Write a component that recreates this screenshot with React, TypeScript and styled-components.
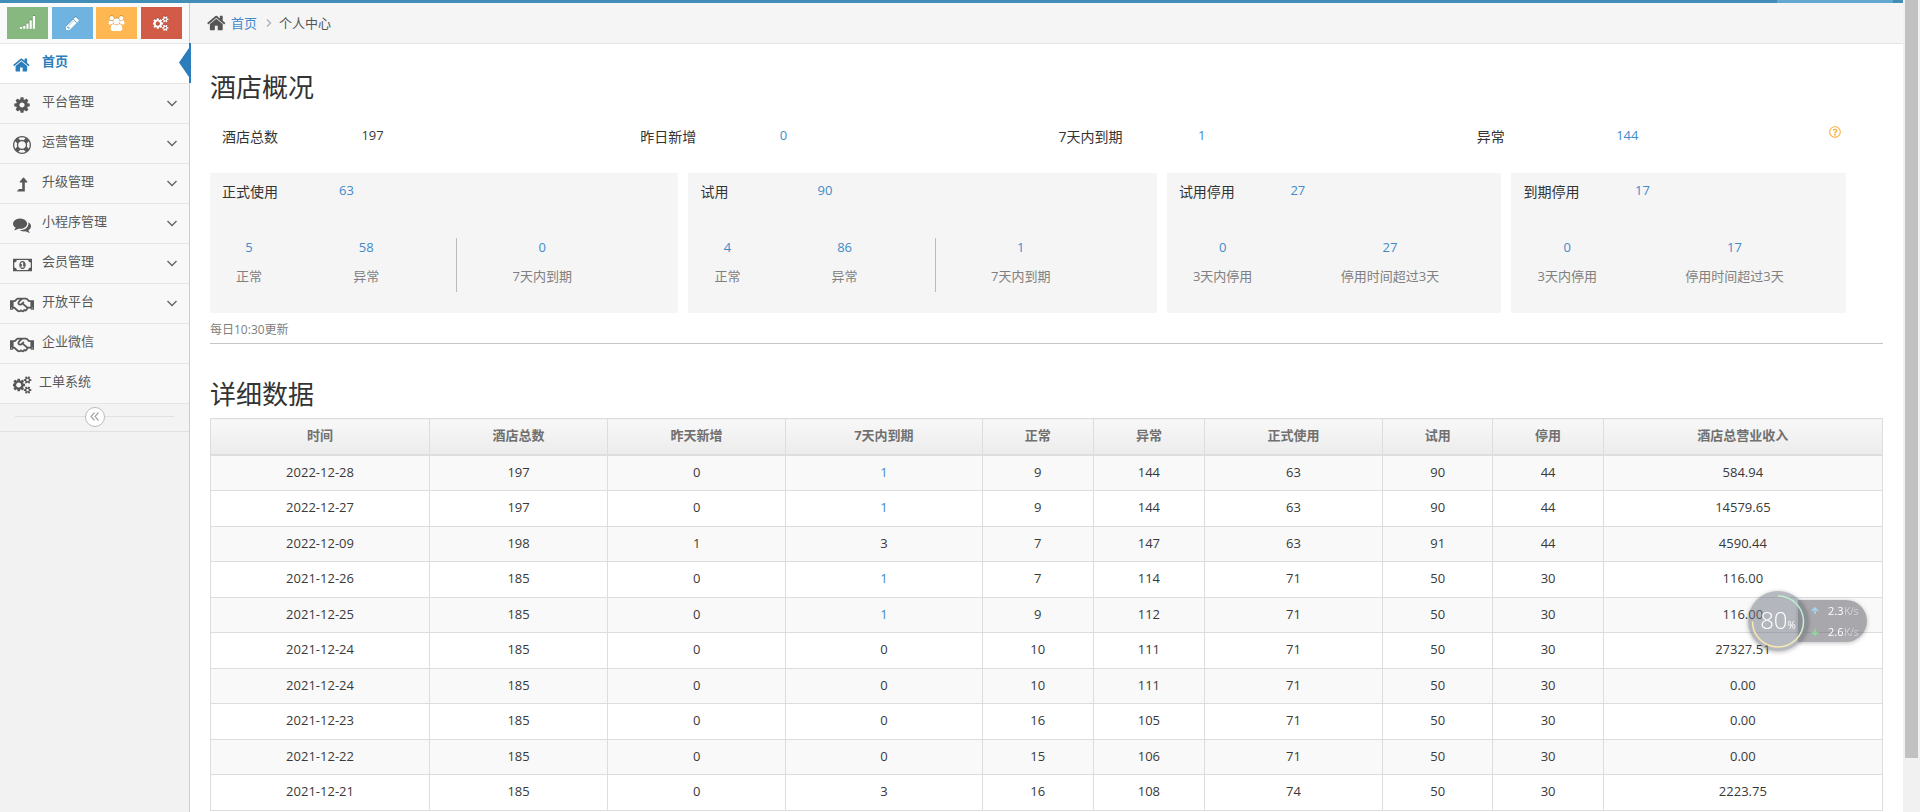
import React from "react";
import styled, { createGlobalStyle } from "styled-components";
import { FaRegHandshake, FaRegQuestionCircle } from "react-icons/fa";

const GlobalStyle = createGlobalStyle`
  *, *::before, *::after { box-sizing: border-box; }
  html { overflow: hidden; }
  body {
    margin: 0;
    background: #fff;
    color: #393939;
    font-family: "Open Sans", "Noto Sans CJK SC", sans-serif;
    font-size: 13px;
    line-height: 20px;
  }
  a { color: #428bca; text-decoration: none; }
`;

/* ---------- icons ---------- */

const PATHS = {
  signal: {
    w: 1792,
    d: "M256 1312v192q0 14-9 23t-23 9H32q-14 0-23-9t-9-23v-192q0-14 9-23t23-9h192q14 0 23 9t9 23zM640 1184v320q0 14-9 23t-23 9H416q-14 0-23-9t-9-23v-320q0-14 9-23t23-9h192q14 0 23 9t9 23zM1024 928v576q0 14-9 23t-23 9H800q-14 0-23-9t-9-23V928q0-14 9-23t23-9h192q14 0 23 9t9 23zM1408 544v960q0 14-9 23t-23 9h-192q-14 0-23-9t-9-23V544q0-14 9-23t23-9h192q14 0 23 9t9 23zM1792 32v1472q0 14-9 23t-23 9h-192q-14 0-23-9t-9-23V32q0-14 9-23t23-9h192q14 0 23 9t9 23z",
  },
  pencil: {
    w: 1792,
    d: "M491 1536l91-91-235-235-91 91v107h128v128h107zm523-928q0-22-22-22-10 0-17 7l-542 542q-7 7-7 17 0 22 22 22 10 0 17-7l542-542q7-7 7-17zm-54-192l416 416-832 832h-416v-416zm683 96q0 53-37 90l-166 166-416-416 166-165q36-38 90-38 53 0 91 38l235 234q37 39 37 91z",
  },
  users: {
    w: 2048,
    d: "M657 896q-162 5-265 128h-134q-82 0-138-40.5t-56-118.5q0-353 124-353 6 0 43.500 21t97.500 42.500 119 21.500q67 0 133-23-5 37-5 66 0 159 81 298zm1071 637q0 120-73 189.500t-194 69.500h-874q-121 0-194-69.500t-73-189.500q0-53 3.500-103.500t14-109 26.500-108.500 43-97.500 62-81 85.500-53.500 111.500-20q10 0 43 21.500t73 48 107 48 135 21.500 135-21.500 107-48 73-48 43-21.500q61 0 111.500 20t85.500 53.500 62 81 43 97.500 26.500 108.500 14 109 3.500 103.500zm-1024-1277q0 106-75 181t-181 75-181-75-75-181 75-181 181-75 181 75 75 181zm704 384q0 159-112.500 271.500t-271.500 112.500-271.500-112.500-112.500-271.500 112.500-271.500 271.500-112.500 271.500 112.500 112.500 271.500zm576 225q0 78-56 118.500t-138 40.500h-134q-103-123-265-128 81-139 81-298 0-29-5-66 66 23 133 23 59 0 119-21.500t97.500-42.500 43.500-21q124 0 124 353zm-128-609q0 106-75 181t-181 75-181-75-75-181 75-181 181-75 181 75 75 181z",
  },
  cogs: {
    w: 1920,
    d: "M832 896q0-106-75-181t-181-75-181 75-75 181 75 181 181 75 181-75 75-181zm768 512q0-52-38-90t-90-38-90 38-38 90q0 53 37.500 90.500t90.500 37.500 90.500-37.500 37.500-90.500zm0-1024q0-52-38-90t-90-38-90 38-38 90q0 53 37.500 90.500t90.500 37.500 90.500-37.500 37.500-90.500zm-384 421v185q0 10-7 19.500t-16 10.500l-155 24q-11 35-32 76 34 48 90 115 7 11 7 20 0 12-7 19-23 30-82.500 89.500t-78.500 59.500q-11 0-21-7l-115-90q-37 19-77 31-11 108-23 155-7 24-30 24h-186q-11 0-20-7.500t-10-17.500l-23-153q-34-10-75-31l-118 89q-7 7-20 7-11 0-21-8-144-133-144-160 0-9 7-19 10-14 41-53t47-61q-23-44-35-82l-152-24q-10-1-17-9.500t-7-19.500v-185q0-10 7-19.500t16-10.500l155-24q11-35 32-76-34-48-90-115-7-11-7-20 0-12 7-20 22-30 82-89t79-59q11 0 21 7l115 90q34-18 77-32 11-108 23-154 7-24 30-24h186q11 0 20 7.500t10 17.500l23 153q34 10 75 31l118-89q8-7 20-7 11 0 21 8 144 133 144 160 0 8-7 19-12 16-42 54t-45 60q23 48 34 82l152 23q10 2 17 10.500t7 19.500zm640 533v140q0 16-149 31-12 27-30 52 51 113 51 138 0 4-4 7-122 71-124 71-8 0-46-47t-52-68q-20 2-30 2t-30-2q-14 21-52 68t-46 47q-2 0-124-71-4-3-4-7 0-25 51-138-18-25-30-52-149-15-149-31v-140q0-16 149-31 13-29 30-52-51-113-51-138 0-4 4-7 4-2 35-20t59-34 30-16q8 0 46 46.500t52 67.500q20-2 30-2t30 2q51-71 92-112l6-2q4 0 124 70 4 3 4 7 0 25-51 138 17 23 30 52 149 15 149 31zm0-1024v140q0 16-149 31-12 27-30 52 51 113 51 138 0 4-4 7-122 71-124 71-8 0-46-47t-52-68q-20 2-30 2t-30-2q-14 21-52 68t-46 47q-2 0-124-71-4-3-4-7 0-25 51-138-18-25-30-52-149-15-149-31v-140q0-16 149-31 13-29 30-52-51-113-51-138 0-4 4-7 4-2 35-20t59-34 30-16q8 0 46 46.500t52 67.500q20-2 30-2t30 2q51-71 92-112l6-2q4 0 124 70 4 3 4 7 0 25-51 138 17 23 30 52 149 15 149 31z",
  },
  home: {
    w: 1792,
    d: "M1408 992v480q0 26-19 45t-45 19h-384v-384h-256v384h-384q-26 0-45-19t-19-45v-480q0-1 .5-3t.5-3l575-474 575 474q1 2 1 6zm223-69l-62 74q-8 9-21 11h-3q-13 0-21-7l-692-577-692 577q-12 8-24 7-13-2-21-11l-62-74q-8-10-7-23.500t11-21.500l719-599q32-26 76-26t76 26l244 204v-195q0-14 9-23t23-9h192q14 0 23 9t9 23v408l219 182q10 8 11 21.500t-7 23.500z",
  },
  cog: {
    w: 1792,
    d: "M1152 896q0-106-75-181t-181-75-181 75-75 181 75 181 181 75 181-75 75-181zm512-109v222q0 12-8 23t-20 13l-185 28q-19 54-39 91 35 50 107 138 10 12 10 25t-9 23q-27 37-99 108t-94 71q-12 0-26-9l-138-108q-44 23-91 38-16 136-29 186-7 28-36 28h-222q-14 0-24.500-8.500t-11.500-21.500l-28-184q-49-16-90-37l-141 107q-10 9-25 9-14 0-25-11-126-114-165-168-7-10-7-23 0-12 8-23 15-21 51-66.500t54-70.500q-27-50-41-99l-183-27q-13-2-21-12.500t-8-23.500v-222q0-12 8-23t19-13l186-28q14-46 39-92-40-57-107-138-10-12-10-24 0-10 9-23 26-36 98.500-107.500t94.500-71.500q13 0 26 10l138 107q44-23 91-38 16-136 29-186 7-28 36-28h222q14 0 24.500 8.500t11.500 21.500l28 184q49 16 90 37l142-107q9-9 24-9 13 0 25 10 129 119 165 170 7 8 7 22 0 12-8 23-15 21-51 66.500t-54 70.500q26 50 41 98l183 28q13 2 21 12.500t8 23.500z",
  },
  ring: {
    w: 1792,
    d: "M896 0q182 0 348 71t286 191 191 286 71 348-71 348-191 286-286 191-348 71-348-71-286-191-191-286-71-348 71-348 191-286 286-191 348-71zm0 128q-190 0-361 90l194 194q82-28 167-28t167 28l194-194q-171-90-361-90zm-678 1129l194-194q-28-82-28-167t28-167l-194-194q-90 171-90 361t90 361zm678 407q190 0 361-90l-194-194q-82 28-167 28t-167-28l-194 194q171 90 361 90zm0-384q159 0 271.500-112.500t112.500-271.500-112.500-271.500-271.500-112.500-271.500 112.500-112.500 271.500 112.500 271.500 271.500 112.500zm484-217l194 194q90-171 90-361t-90-361l-194 194q28 82 28 167t-28 167z",
  },
  levelUp: {
    w: 1792,
    d: "M1427 619q-19 37-59 37h-192v864q0 14-9 23t-23 9H440q-21 0-30-18-8-20 5-34l160-192q9-11 25-11h320V656H728q-40 0-59-37-17-37 9-68l320-384q18-22 49-22t49 22l320 384q27 32 11 68z",
  },
  comments: {
    w: 1792,
    d: "M1408 768q0 139-94 257t-256.500 186.500-353.500 68.500q-86 0-176-16-124 88-278 128-36 9-86 16h-3q-11 0-20.500-8t-11.500-21q-1-3-1-6.500t.5-6.500 2-6l2.500-5 3.500-5.500 4-5 4.500-5 4-4.500q5-6 23-25t26-29.500 22.500-29 25-38.500 20.500-44q-124-72-195-177t-71-224q0-139 94-257t256.500-186.500 353.500-68.500 353.500 68.500 256.500 186.500 94 257zm384 256q0 120-71 224.500t-195 176.500q10 24 20.500 44t25 38.500 22.500 29 26 29.500 23 25q1 1 4 4.500t4.500 5 4 5 3.500 5.500l2.500 5 2 6 .5 6.500-1 6.500q-3 14-13 22t-22 7q-50-7-86-16-154-40-278-128-90 16-176 16-271 0-472-132 58 4 88 4 161 0 309-45t264-129q125-92 192-212t67-254q0-77-23-152 129 71 204 178t75 230z",
  },
  money: {
    w: 1920,
    d: "M768 1152h384v-96h-128v-448h-114l-148 137 77 80q42-37 55-57h2v288h-128v96zm512-256q0 70-21 142t-59.500 134-101.500 101-138 39-138-39-101.500-101-59.500-134-21-142 21-142 59.500-134 101.500-101 138-39 138 39 101.500 101 59.500 134 21 142zm512 256v-512q-106 0-181-75t-75-181h-1152q0 106-75 181t-181 75v512q106 0 181 75t75 181h1152q0-106 75-181t181-75zm128-832v1152q0 26-19 45t-45 19h-1792q-26 0-45-19t-19-45v-1152q0-26 19-45t45-19h1792q26 0 45 19t19 45z",
  },
};

type GlyphName = keyof typeof PATHS;

const Glyph = ({ name, size }: { name: GlyphName; size: number }) => (
  <svg
    width={Math.round((size * PATHS[name].w) / 1792)}
    height={size}
    viewBox={`0 0 ${PATHS[name].w} 1792`}
    fill="currentColor"
    aria-hidden="true"
  >
    <path d={PATHS[name].d} />
  </svg>
);

/* ---------- frame ---------- */

const Page = styled.div`
  height: 100vh;
  display: grid;
  grid-template-columns: minmax(0, 1fr) 17px;
  overflow: hidden;
`;

const Scrollbar = styled.div`
  background: #f1f1f1;
  padding: 0 2px;
`;

const ScrollThumb = styled.div`
  height: 758px;
  max-height: 94%;
  background: #c1c1c1;
`;

const Shell = styled.div`
  display: flex;
  flex-direction: column;
`;

const TopBar = styled.div`
  flex: none;
  height: 3px;
  padding-right: 10px;
  background: #438eb9;
  display: flex;
  justify-content: flex-end;
`;

const TopBarUser = styled.div`
  width: 116px;
  background: #62a8d1;
`;

const Body = styled.div`
  flex: 1;
  display: flex;
  align-items: stretch;
  min-height: 0;
`;

/* ---------- sidebar ---------- */

const Sidebar = styled.aside`
  flex: none;
  width: 190px;
  background: #f2f2f2;
  border-right: 1px solid #ccc;
`;

const Shortcuts = styled.div`
  height: 40px;
  padding: 4px 7px;
  background: #fafafa;
  display: flex;
  justify-content: space-between;
`;

const Shortcut = styled.button<{ $color: string }>`
  width: 41px;
  height: 32px;
  padding: 0;
  border: 0;
  background: ${(p) => p.$color};
  color: #fff;
  display: flex;
  align-items: center;
  justify-content: center;
  svg { filter: drop-shadow(0 -1px 0 rgba(0, 0, 0, 0.2)); }
`;

const Menu = styled.ul`
  list-style: none;
  margin: 0;
  padding: 0;
  border-bottom: 1px solid #e5e5e5;
`;

const MenuItem = styled.li`
  position: relative;
  border-top: 1px solid #e5e5e5;
`;

const MenuLink = styled.a<{ $active?: boolean; $tight?: boolean }>`
  display: flex;
  align-items: center;
  height: 39px;
  padding: 0 12px 0 7px;
  gap: ${(p) => (p.$tight ? 2 : 5)}px;
  background: ${(p) => (p.$active ? "#fff" : "#f8f8f8")};
  color: ${(p) => (p.$active ? "#2b7dbc" : "#585858")};
  font-weight: ${(p) => (p.$active ? 700 : 400)};
`;

const MenuIcon = styled.span`
  width: 30px;
  padding-top: 2px;
  display: flex;
  justify-content: center;
`;

const MenuText = styled.span`
  flex: 1;
  padding-bottom: 5px;
`;

const ActiveMarker = styled.svg`
  position: absolute;
  top: -1px;
  right: -2px;
`;

const Collapse = styled.div`
  height: 28px;
  padding: 0 15px 2px;
  background: #f3f3f3;
  border-bottom: 1px solid #e0e0e0;
  display: flex;
  align-items: center;
`;

const CollapseLine = styled.span`
  flex: 1;
  border-top: 1px solid #e0e0e0;
`;

const CollapseButton = styled.button`
  width: 20px;
  height: 20px;
  padding: 0;
  border: 1px solid #bbb;
  border-radius: 50%;
  background: #fff;
  color: #aaa;
  display: flex;
  align-items: center;
  justify-content: center;
`;

/* ---------- main ---------- */

const Main = styled.main`
  flex: 1;
  min-width: 0;
`;

const Breadcrumb = styled.nav`
  height: 41px;
  padding: 0 17px;
  background: #f5f5f5;
  border-bottom: 1px solid #e5e5e5;
  color: #555;
  display: flex;
  align-items: center;
  gap: 4px;
`;

const Content = styled.div`
  padding: 18px 20px 0;
`;

const Title = styled.h1`
  margin: 0;
  font-size: 26px;
  font-weight: 400;
  line-height: 50px;
  color: #333;
`;

const Subtitle = styled(Title).attrs({ as: "h2" })`
  line-height: 48px;
`;

const Summary = styled.dl`
  position: relative;
  margin: 0;
  padding-top: 14px;
  height: 61px;
  display: grid;
  grid-template-columns: repeat(4, 1fr);
`;

const Stat = styled.div<{ $cols: string }>`
  display: grid;
  grid-template-columns: ${(p) => p.$cols};
  align-items: start;
`;

const StatLabel = styled.dt`
  padding-left: 12px;
  font-size: 14px;
  color: #333;
  padding-top: 1px;
`;

const StatValue = styled.dd`
  margin: 0;
  padding-left: 12px;
  line-height: 18px;
`;

const Help = styled.button`
  position: absolute;
  top: 14px;
  right: 42px;
  width: 12px;
  height: 12px;
  padding: 0;
  border: 0;
  background: none;
  color: #ffb044;
  display: flex;
  svg { width: 12px; height: 12px; }
`;

const Cards = styled.div`
  display: flex;
  gap: 10px;
`;

const Card = styled.section<{ $width: number }>`
  width: ${(p) => p.$width}%;
  height: 140px;
  padding-top: 8px;
  background: #f5f5f5;
`;

const CardHead = styled(Stat).attrs({ as: "dl" })`
  margin: 0 0 36px;
`;

const Parts = styled.div<{ $cols: string }>`
  display: grid;
  grid-template-columns: ${(p) => p.$cols};
  text-align: center;
`;

const Part = styled.div<{ $divided?: boolean }>`
  display: flex;
  flex-direction: column;
  gap: 11px;
  height: 54px;
  line-height: 18px;
  margin: 0 ${(p) => (p.$divided ? 12 : 0)}px;
  border-left: ${(p) => (p.$divided ? "1px solid #bbb" : "0")};
  white-space: nowrap;
`;

const PartLabel = styled.span`
  color: #808080;
`;

const Note = styled.p`
  margin: 0;
  padding: 7px 0 3px;
  font-size: 12px;
  color: #808080;
  border-bottom: 1px solid #c5c5c5;
`;

const Details = styled.section`
  padding-top: 26px;
`;

const Table = styled.table`
  width: 100%;
  table-layout: fixed;
  border-collapse: collapse;
  text-align: center;
  line-height: 1.5;
`;

const HeadCell = styled.th<{ $width: string }>`
  width: ${(p) => p.$width};
  height: 36px;
  padding: 0 0 2px;
  border: 1px solid #ddd;
  border-bottom-width: 2px;
  background: linear-gradient(#f8f8f8, #ececec);
  color: #707070;
  font-weight: 700;
`;

const Row = styled.tr`
  &:nth-child(odd) { background: #f9f9f9; }
`;

const Cell = styled.td`
  padding: 7px 8px 8px;
  border: 1px solid #ddd;
`;

/* ---------- network monitor ---------- */

const Monitor = styled.div`
  position: fixed;
  right: 53px;
  bottom: 160px;
  width: 119px;
  height: 62px;
  display: flex;
  align-items: center;
  color: #fff;
`;

const Gauge = styled.div`
  position: relative;
  z-index: 1;
  flex: none;
  width: 60px;
  height: 60px;
  border-radius: 50%;
  background: rgba(112, 115, 130, 0.5);
  box-shadow: 0 1px 4px rgba(0, 0, 0, 0.3);
  display: flex;
  align-items: baseline;
  justify-content: center;
  font-size: 24px;
  font-weight: 300;
  line-height: 58px;
  small { font-size: 10px; font-weight: 400; }
  svg { position: absolute; top: 0; left: 0; }
`;

const Rates = styled.div`
  flex: 1;
  height: 42px;
  margin-left: -10px;
  padding-left: 13px;
  border-radius: 0 21px 21px 0;
  background: rgba(85, 86, 96, 0.5);
  box-shadow: 0 1px 4px rgba(0, 0, 0, 0.25);
`;

const Rate = styled.div`
  height: 21px;
  display: flex;
  align-items: center;
  gap: 9px;
  font-size: 11px;
  font-weight: 500;
  white-space: nowrap;
  small { font-size: 10px; font-weight: 300; color: #e4e4e8; margin-left: 1px; }
`;

/* ---------- data ---------- */

type MenuEntry = { text: string; icon: React.ReactNode; open?: boolean; active?: boolean; tight?: boolean };

const MENU: MenuEntry[] = [
  { text: "首页", icon: <Glyph name="home" size={18} />, active: true },
  { text: "平台管理", icon: <Glyph name="cog" size={18} />, open: true },
  { text: "运营管理", icon: <Glyph name="ring" size={18} />, open: true },
  { text: "升级管理", icon: <Glyph name="levelUp" size={18} />, open: true },
  { text: "小程序管理", icon: <Glyph name="comments" size={18} />, open: true },
  { text: "会员管理", icon: <Glyph name="money" size={18} />, open: true },
  { text: "开放平台", icon: <FaRegHandshake size={24} />, open: true },
  { text: "企业微信", icon: <FaRegHandshake size={24} /> },
  { text: "工单系统", icon: <Glyph name="cogs" size={18} />, tight: true },
];

const SUMMARY = [
  { label: "酒店总数", value: "197" },
  { label: "昨日新增", value: "0", link: true },
  { label: "7天内到期", value: "1", link: true },
  { label: "异常", value: "144", link: true },
];

const CARDS = [
  { label: "正式使用", value: "63", parts: [["5", "正常"], ["58", "异常"], ["0", "7天内到期"]] },
  { label: "试用", value: "90", parts: [["4", "正常"], ["86", "异常"], ["1", "7天内到期"]] },
  { label: "试用停用", value: "27", parts: [["0", "3天内停用"], ["27", "停用时间超过3天"]] },
  { label: "到期停用", value: "17", parts: [["0", "3天内停用"], ["17", "停用时间超过3天"]] },
];

const COLUMNS: [string, string][] = [
  ["时间", "13.1%"],
  ["酒店总数", "10.65%"],
  ["昨天新增", "10.65%"],
  ["7天内到期", "11.75%"],
  ["正常", "6.65%"],
  ["异常", "6.65%"],
  ["正式使用", "10.65%"],
  ["试用", "6.6%"],
  ["停用", "6.6%"],
  ["酒店总营业收入", "auto"],
];

const ROWS = [
  ["2022-12-28", "197", "0", "1", "9", "144", "63", "90", "44", "584.94"],
  ["2022-12-27", "197", "0", "1", "9", "144", "63", "90", "44", "14579.65"],
  ["2022-12-09", "198", "1", "3", "7", "147", "63", "91", "44", "4590.44"],
  ["2021-12-26", "185", "0", "1", "7", "114", "71", "50", "30", "116.00"],
  ["2021-12-25", "185", "0", "1", "9", "112", "71", "50", "30", "116.00"],
  ["2021-12-24", "185", "0", "0", "10", "111", "71", "50", "30", "27327.51"],
  ["2021-12-24", "185", "0", "0", "10", "111", "71", "50", "30", "0.00"],
  ["2021-12-23", "185", "0", "0", "16", "105", "71", "50", "30", "0.00"],
  ["2021-12-22", "185", "0", "0", "15", "106", "71", "50", "30", "0.00"],
  ["2021-12-21", "185", "0", "3", "16", "108", "74", "50", "30", "2223.75"],
];

const Arrow = ({ down }: { down?: boolean }) => (
  <svg width="8" height="8" viewBox="0 0 8 8" fill="none" stroke={down ? "#8fdc9a" : "#a5d8f5"} strokeWidth="1.500">
    <path d={down ? "M4 1v6M1 4l3 3 3-3" : "M4 7V1M1 4l3-3 3 3"} />
  </svg>
);

export default function App() {
  return (
    <Page>
      <GlobalStyle />
      <Shell>
        <TopBar>
          <TopBarUser />
        </TopBar>
        <Body>
          <Sidebar>
            <Shortcuts>
              <Shortcut $color="#87b87f" aria-label="统计"><Glyph name="signal" size={15} /></Shortcut>
              <Shortcut $color="#6fb3e0" aria-label="编辑"><Glyph name="pencil" size={15} /></Shortcut>
              <Shortcut $color="#ffb752" aria-label="用户"><Glyph name="users" size={15} /></Shortcut>
              <Shortcut $color="#d15b47" aria-label="设置"><Glyph name="cogs" size={15} /></Shortcut>
            </Shortcuts>
            <Menu>
              {MENU.map((m) => (
                <MenuItem key={m.text}>
                  <MenuLink href="#" $active={m.active} $tight={m.tight}>
                    <MenuIcon>{m.icon}</MenuIcon>
                    <MenuText>{m.text}</MenuText>
                    {m.open && (
                      <svg width="10" height="7" viewBox="0 0 10 7" fill="none" stroke="#666" strokeWidth="1.400">
                        <path d="M.5 1L5 5.500 9.500 1" />
                      </svg>
                    )}
                  </MenuLink>
                  {m.active && (
                    <ActiveMarker width="12" height="40" viewBox="0 0 12 40" fill="#2b7dbc">
                      <path d="M10 0h2v40h-2V34L0 19.500 10 5z" />
                    </ActiveMarker>
                  )}
                </MenuItem>
              ))}
            </Menu>
            <Collapse>
              <CollapseLine />
              <CollapseButton aria-label="收起菜单">
                <svg width="9" height="9" viewBox="0 0 9 9" fill="none" stroke="currentColor" strokeWidth="1.300">
                  <path d="M4.500 .5l-3.500 4 3.500 4M8.500 .5L5 4.500l3.500 4" />
                </svg>
              </CollapseButton>
              <CollapseLine />
            </Collapse>
          </Sidebar>
          <Main>
            <Breadcrumb>
              <Glyph name="home" size={20} />
              <a href="#">首页</a>
              <svg width="14" height="8" viewBox="0 0 14 8" fill="none" stroke="#b2b6bf" strokeWidth="1.500">
                <path d="M6 0.500l3.500 3.500L6 7.500" />
              </svg>
              <span>个人中心</span>
            </Breadcrumb>
            <Content>
              <Title>酒店概况</Title>
              <Summary>
                {SUMMARY.map((s) => (
                  <Stat key={s.label} $cols="1fr 2fr">
                    <StatLabel>{s.label}</StatLabel>
                    <StatValue>{s.link ? <a href="#">{s.value}</a> : s.value}</StatValue>
                  </Stat>
                ))}
                <Help aria-label="说明"><FaRegQuestionCircle /></Help>
              </Summary>
              <Cards>
                {CARDS.map((c) => {
                  const wide = c.parts.length === 3;
                  return (
                    <Card key={c.label} $width={wide ? 28 : 20}>
                      <CardHead $cols={wide ? "1fr 3fr" : "1fr 2fr"}>
                        <StatLabel>{c.label}</StatLabel>
                        <StatValue><a href="#">{c.value}</a></StatValue>
                      </CardHead>
                      <Parts $cols={wide ? "2fr 4fr 5fr 1fr" : "1fr 2fr"}>
                        {c.parts.map(([value, label], i) => (
                          <Part key={label} $divided={i === 2}>
                            <a href="#">{value}</a>
                            <PartLabel>{label}</PartLabel>
                          </Part>
                        ))}
                      </Parts>
                    </Card>
                  );
                })}
              </Cards>
              <Note>每日10:30更新</Note>
              <Details>
                <Subtitle>详细数据</Subtitle>
                <Table>
                  <thead>
                    <tr>
                      {COLUMNS.map(([name, width]) => (
                        <HeadCell key={name} $width={width}>{name}</HeadCell>
                      ))}
                    </tr>
                  </thead>
                  <tbody>
                    {ROWS.map((row, r) => (
                      <Row key={r}>
                        {row.map((value, c) => (
                          <Cell key={c}>{c === 3 && value === "1" ? <a href="#">{value}</a> : value}</Cell>
                        ))}
                      </Row>
                    ))}
                  </tbody>
                </Table>
              </Details>
            </Content>
          </Main>
        </Body>
      </Shell>
      <Scrollbar>
        <ScrollThumb />
      </Scrollbar>
      <Monitor>
        <Gauge>
          80<small>%</small>
          <svg width="60" height="60" viewBox="0 0 60 60" fill="none" strokeWidth="1.500">
            <defs>
              <linearGradient id="ring" x1="0" y1="1" x2="1" y2="0">
                <stop offset="0" stopColor="#ffe3a8" />
                <stop offset="0.5" stopColor="#eef0b4" />
                <stop offset="1" stopColor="#9ff0dc" />
              </linearGradient>
            </defs>
            <path d="M30 5a25.500 25.500 0 1 1-25.500 25.500" stroke="url(#ring)" />
          </svg>
        </Gauge>
        <Rates>
          <Rate><Arrow /><span>2.3<small>K/s</small></span></Rate>
          <Rate><Arrow down /><span>2.6<small>K/s</small></span></Rate>
        </Rates>
      </Monitor>
    </Page>
  );
}
